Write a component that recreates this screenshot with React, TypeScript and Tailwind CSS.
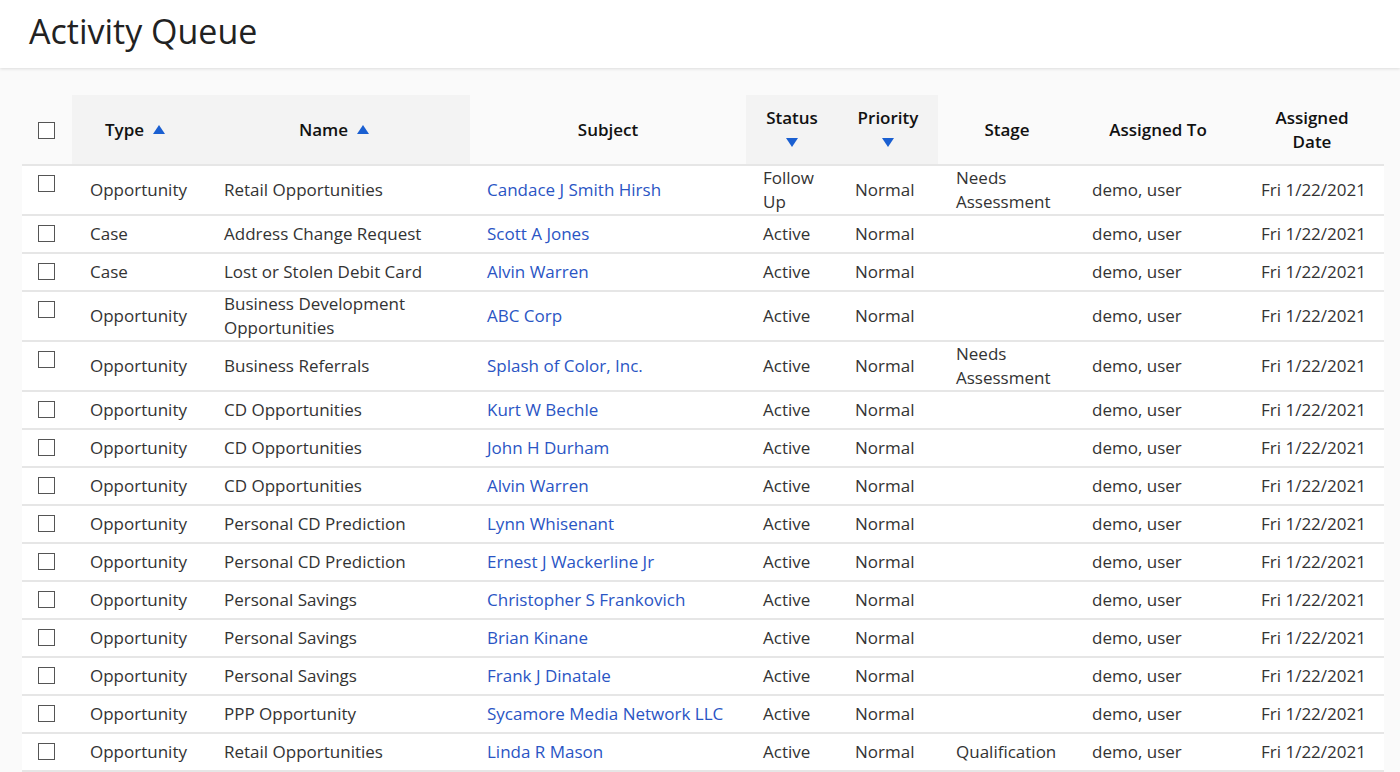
import React from "react";

const rows: [string, string, string, string, string][] = [
  ["Opportunity", "Retail Opportunities", "Candace J Smith Hirsh", "Follow Up", "Needs Assessment"],
  ["Case", "Address Change Request", "Scott A Jones", "Active", ""],
  ["Case", "Lost or Stolen Debit Card", "Alvin Warren", "Active", ""],
  ["Opportunity", "Business Development Opportunities", "ABC Corp", "Active", ""],
  ["Opportunity", "Business Referrals", "Splash of Color, Inc.", "Active", "Needs Assessment"],
  ["Opportunity", "CD Opportunities", "Kurt W Bechle", "Active", ""],
  ["Opportunity", "CD Opportunities", "John H Durham", "Active", ""],
  ["Opportunity", "CD Opportunities", "Alvin Warren", "Active", ""],
  ["Opportunity", "Personal CD Prediction", "Lynn Whisenant", "Active", ""],
  ["Opportunity", "Personal CD Prediction", "Ernest J Wackerline Jr", "Active", ""],
  ["Opportunity", "Personal Savings", "Christopher S Frankovich", "Active", ""],
  ["Opportunity", "Personal Savings", "Brian Kinane", "Active", ""],
  ["Opportunity", "Personal Savings", "Frank J Dinatale", "Active", ""],
  ["Opportunity", "PPP Opportunity", "Sycamore Media Network LLC", "Active", ""],
  ["Opportunity", "Retail Opportunities", "Linda R Mason", "Active", "Qualification"],
];

const Up = () => (
  <svg width="12" height="9" viewBox="0 0 12 9" className="inline-block ml-[9px] mb-[3px]"><path d="M6 0L12 9H0z" fill="#1a5fd1" /></svg>
);
const Down = () => (
  <svg width="12" height="9" viewBox="0 0 12 9" className="inline-block"><path d="M0 0h12L6 9z" fill="#1a5fd1" /></svg>
);
const Box = () => <div className="w-[17px] h-[17px] border-[1.5px] border-[#555] bg-white" />;

export default function App() {
  return (
    <div className="min-h-[772px] bg-[#fafafa] text-[#222]" style={{ fontFamily: '"Open Sans", sans-serif' }}>
      <div className="h-[68px] bg-white shadow-[0_1px_3px_rgba(0,0,0,0.12)] pl-[29px] flex items-center">
        <h1 className="text-[34px] text-[#222] leading-none -mt-[6px]">Activity Queue</h1>
      </div>
      <div className="pl-[22px] pr-[16px] pt-[27px]">
        <table className="table-fixed border-collapse w-[1362px] bg-white text-[17px] leading-[24px]">
          <colgroup>
            <col className="w-[50px]" /><col className="w-[134px]" /><col className="w-[264px]" /><col className="w-[276px]" />
            <col className="w-[92px]" /><col className="w-[100px]" /><col className="w-[138px]" /><col className="w-[164px]" /><col className="w-[144px]" />
          </colgroup>
          <thead>
            <tr className="h-[70px] font-semibold text-[#111] border-b-2 border-[#e6e6e6]">
              <th className="bg-[#fafafa] pl-[16px]"><div className="mt-[2px]"><Box /></div></th>
              <th className="bg-[#f3f3f3] font-semibold pr-[8px]">Type<Up /></th>
              <th className="bg-[#f3f3f3] font-semibold pr-[8px]">Name<Up /></th>
              <th className="bg-[#fafafa] font-semibold">Subject</th>
              <th className="bg-[#f3f3f3] font-semibold"><div>Status</div><Down /></th>
              <th className="bg-[#f3f3f3] font-semibold"><div>Priority</div><Down /></th>
              <th className="bg-[#fafafa] font-semibold">Stage</th>
              <th className="bg-[#fafafa] font-semibold">Assigned To</th>
              <th className="bg-[#fafafa] font-semibold px-4">Assigned Date</th>
            </tr>
          </thead>
          <tbody>
            {rows.map((r, i) => (
              <tr key={i} className="border-b-2 border-[#e6e6e6]">
                <td className="pl-[16px] py-[6px] align-top"><div className="mt-[3px]"><Box /></div></td>
                <td className="pl-[18px] py-[6px] text-[#333]">{r[0]}</td>
                <td className="pl-[18px] pr-[40px] py-0 text-[#333]">{r[1]}</td>
                <td className="pl-[17px] py-[6px] text-[#2a55c4]">{r[2]}</td>
                <td className="pl-[17px] pr-2 py-0 text-[#333]">{r[3]}</td>
                <td className="pl-[17px] py-[6px] text-[#333]">Normal</td>
                <td className="pl-[18px] pr-2 py-0 text-[#333]">{r[4]}</td>
                <td className="pl-[16px] py-[6px] text-[#333]">demo, user</td>
                <td className="pl-[21px] py-[6px] text-[#333] whitespace-nowrap">Fri 1/22/2021</td>
              </tr>
            ))}
          </tbody>
        </table>
      </div>
    </div>
  );
}
